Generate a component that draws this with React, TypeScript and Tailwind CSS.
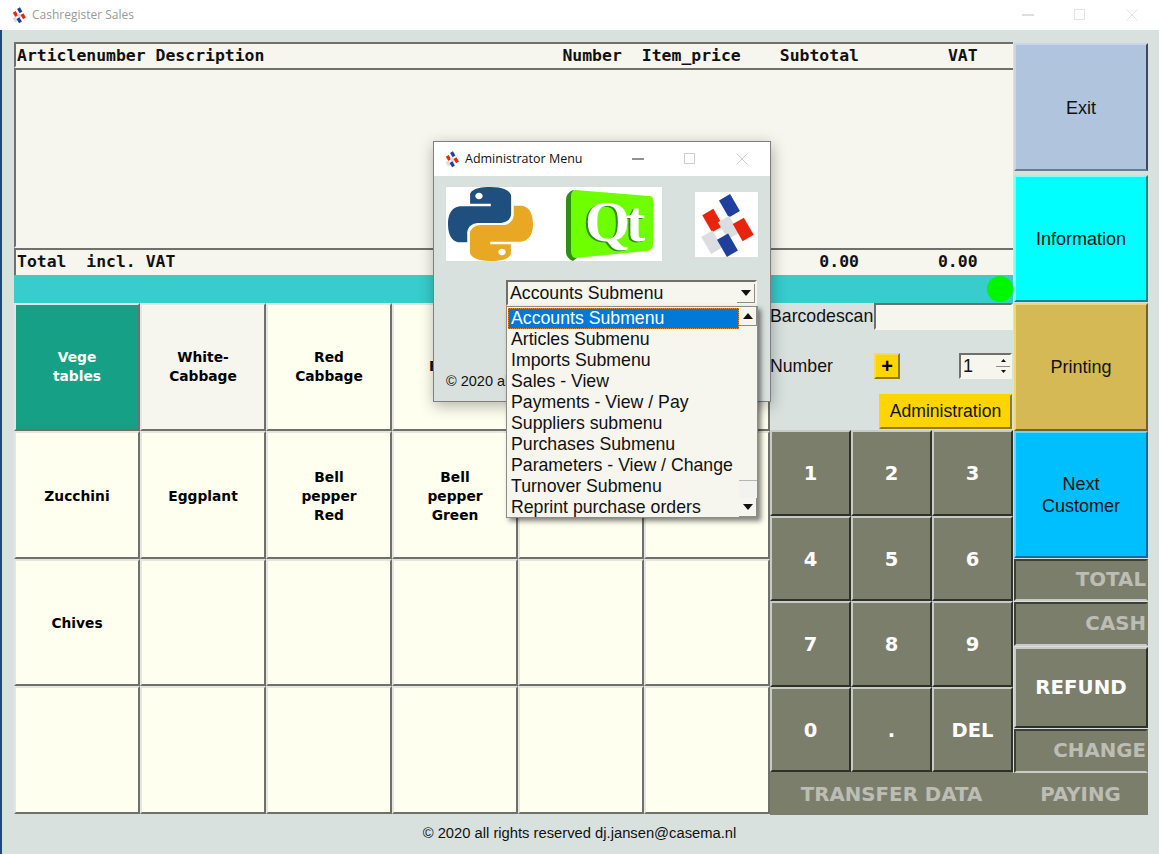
import React from 'react';

const mono = "font-['DejaVu_Sans_Mono',monospace]";
const arial = "font-['Liberation_Sans',Arial,sans-serif]";
const verdana = "font-['DejaVu_Sans',Verdana,sans-serif]";
const segoe = "font-['Open_Sans','Noto_Sans',sans-serif]";

const bevel = 'border-2 border-t-[#e4e7e1] border-l-[#e4e7e1] border-r-[#6f706a] border-b-[#6f706a]';
const sunken = 'border-2 border-t-[#6f6f6b] border-l-[#6f6f6b] border-r-[#f6f5ee] border-b-[#f6f5ee]';

const ARTICLES = [
  'Vege\ntables', 'White-\nCabbage', 'Red\nCabbage', 'Fennel', '', '',
  'Zucchini', 'Eggplant', 'Bell\npepper\nRed', 'Bell\npepper\nGreen', '', '',
  'Chives', '', '', '', '', '',
  '', '', '', '', '', '',
];

const KEYS = ['1', '2', '3', '4', '5', '6', '7', '8', '9', '0', '.', 'DEL'];

const MENU = [
  'Accounts Submenu',
  'Articles Submenu',
  'Imports Submenu',
  'Sales - View',
  'Payments - View / Pay',
  'Suppliers submenu',
  'Purchases Submenu',
  'Parameters - View / Change',
  'Turnover Submenu',
  'Reprint purchase orders',
];

// the six tilted blocks of the company logo: x, y, colour
const LOGO_BLOCKS: [number, number, string][] = [
  [35, 13, '#1f3f9c'],
  [18, 28, '#e8240c'],
  [34, 35, '#dcdde0'],
  [49, 37, '#e8240c'],
  [17, 50, '#dcdde0'],
  [33, 53, '#1f3f9c'],
];

const CompanyLogo = ({ className }: { className: string }) => (
  <svg viewBox="0 0 64 64" className={className}>
    {LOGO_BLOCKS.map(([x, y, color]) => (
      <rect
        key={`${x}-${y}`}
        x="-6.5"
        y="-10"
        width="13"
        height="20"
        fill={color}
        transform={`translate(${x} ${y}) rotate(-30)`}
      />
    ))}
  </svg>
);

const PYTHON_PATH =
  'M54.9 0C26.8 0 28.6 12.2 28.6 12.2l0 12.6h26.8v3.8H17.9S0 26.5 0 54.9s15.6 27.4 15.6 27.4h9.3V69.1s-.5-15.6 15.4-15.6h26.5s14.9.2 14.9-14.4V14.9S83.9 0 54.9 0zM40.1 8.5c2.7 0 4.8 2.2 4.8 4.8s-2.2 4.8-4.8 4.8-4.8-2.2-4.8-4.8 2.2-4.8 4.8-4.8z';

const PythonLogo = () => (
  <svg viewBox="0 0 110 110" className="w-[85px] h-[74px] ml-[2px]" preserveAspectRatio="none">
    <path fill="#1f4f7f" d={PYTHON_PATH} />
    <path fill="#e8a823" transform="rotate(180 55 55)" d={PYTHON_PATH} />
  </svg>
);

const QtLogo = () => (
  <div className="relative w-[89px] h-[71px]">
    <svg viewBox="0 0 89 71" className="absolute inset-0 w-full h-full">
      <path fill="#2f8f14" d="M8 0Q1 3 1 10L1 62Q1 68 8 71L12 68L12 4Z" />
      <path fill="#6eff00" d="M10 0L84 6Q88 6 88 10L88 54Q88 60 82 61L10 68Q6 67 6 61L6 6Q6 1 10 0Z" />
    </svg>
    <span className="absolute left-[20px] top-[3px] font-['Liberation_Serif',serif] font-bold text-[58px] leading-[58px] tracking-[-4px] text-white [text-shadow:-2px_1px_0_#2f8f14]">
      Qt
    </span>
  </div>
);

const WindowControls = ({ dim }: { dim: boolean }) => (
  <div className="flex items-center gap-[36px]">
    <svg width="16" height="16" viewBox="0 0 16 16">
      <path d="M2 8h12" stroke={dim ? '#bdbdbd' : '#555'} strokeWidth={dim ? 1 : 1.3} />
    </svg>
    <svg width="16" height="16" viewBox="0 0 16 16">
      <rect x="2.5" y="2.5" width="10" height="10" fill="none" stroke={dim ? '#e4e4e4' : '#cfcfcf'} />
    </svg>
    <svg width="16" height="16" viewBox="0 0 16 16">
      <path d="M2.5 2.5l11 11M13.5 2.5l-11 11" stroke={dim ? '#e4e4e4' : '#cfcfcf'} />
    </svg>
  </div>
);

const SideButton = ({ label, className }: { label: string; className: string }) => (
  <button className={`w-full flex items-center justify-center text-center whitespace-pre-line ${arial} text-[18px] leading-[22px] text-[#111] border-2 ${className}`}>
    {label}
  </button>
);

const SumField = ({ label, className }: { label: string; className: string }) => (
  <div className={`flex items-center justify-end bg-[#7c7e6c] border-2 border-t-[#3d3e36] border-l-[#3d3e36] border-r-[#7c7e6c] border-b-[#c9ccc6] ${verdana} font-bold text-[19.8px] text-[#bcbdb4] ${className}`}>
    {label}
  </div>
);

const ScrollArrow = ({ up }: { up: boolean }) => (
  <div className="w-[18px] h-[19px] flex items-center justify-center bg-[#f6f5ee] border-r border-b border-[#8c8c88]">
    <svg width="10" height="6" viewBox="0 0 10 6">
      <path d={up ? 'M5 0l5 6H0z' : 'M0 0h10L5 6z'} fill="#111" />
    </svg>
  </div>
);

export default function App() {
  return (
    <div className="relative w-[1159px] h-[854px] overflow-hidden flex flex-col bg-[#d9e1df]">
      {/* Title bar */}
      <div className="h-[30px] shrink-0 bg-white flex items-center justify-between pl-[11px] pr-[19px]">
        <div className="flex items-center gap-[5px]">
          <CompanyLogo className="w-[16px] h-[18px]" />
          <span className={`${segoe} text-[12px] text-[#9a9a9a]`}>Cashregister Sales</span>
        </div>
        <WindowControls dim />
      </div>

      {/* Main window */}
      <div className="flex-1 flex flex-col border-l-2 border-[#1c4a80] pl-[12px] pt-[13px]">
        <div className="flex gap-[1px]">
          {/* Left part */}
          <div className="w-[999px] flex flex-col">
            <div className={`-mt-[1px] h-[26px] pt-[2px] flex items-center bg-[#f6f5ee] ${sunken} border-r-0 ${mono} font-bold text-[16.45px] text-[#111] whitespace-pre`}>
              <span className="pl-[1px]">Articlenumber Description</span>
              <span className="ml-[298px]">Number</span>
              <span className="ml-[20px]">Item_price</span>
              <span className="ml-[39px]">Subtotal</span>
              <span className="ml-[89px]">VAT</span>
            </div>
            <div className={`h-[180px] bg-[#f6f5ee] ${sunken} border-r-0`} />
            <div className={`h-[27px] flex items-center bg-[#f6f5ee] ${sunken} border-r-0 border-b-0 ${mono} font-bold text-[16.45px] text-[#111] whitespace-pre`}>
              <span className="pl-[1px]">Total  incl. VAT</span>
              <span className="ml-[644px]">0.00</span>
              <span className="ml-[79px]">0.00</span>
            </div>
            <div className="h-[28px] bg-[#38cccc] flex items-center justify-end">
              <span className="w-[26px] h-[26px] rounded-full bg-[#00f500]" />
            </div>

            <div className="flex">
              {/* Article buttons */}
              <div className="w-[756px] grid grid-cols-6 grid-rows-4 h-[511px]">
                {ARTICLES.map((label, i) => (
                  <button
                    key={i}
                    className={`flex items-center justify-center text-center whitespace-pre-line ${verdana} font-bold text-[13.8px] leading-[19px] ${bevel} ${
                      i >= 6 ? 'pt-[3px]' : ''
                    } ${
                      i === 0
                        ? 'bg-[#16a085] text-white border-t-[#5fb9a6] border-l-[#5fb9a6] border-b-[#0d5a4b] border-r-[#0d5a4b]'
                        : i === 1
                          ? 'bg-[#f6f5ee] text-black'
                          : 'bg-[#fffff0] text-black'
                    }`}
                  >
                    {label}
                  </button>
                ))}
              </div>

              {/* Scan and keypad */}
              <div className="w-[243px] flex flex-col">
                <div className="h-[127px] flex flex-col">
                  <div className="flex h-[27px] items-center">
                    <span className={`w-[104px] ${arial} text-[17.7px] text-[#111]`}>Barcodescan</span>
                    <div className={`flex-1 h-full bg-[#f6f5ee] ${sunken}`} />
                  </div>
                  <div className="flex items-center mt-[23px] h-[26px]">
                    <span className={`w-[104px] ${arial} text-[17.7px] text-[#111]`}>Number</span>
                    <button className={`w-[26px] h-[26px] flex items-center justify-center bg-[#ffd500] border-2 border-t-[#f3dc5c] border-l-[#f3dc5c] border-r-[#8a7a20] border-b-[#8a7a20] ${arial} font-bold text-[20px] leading-[20px] text-black`}>
                      +
                    </button>
                    <div className={`ml-[59px] w-[53px] h-[26px] flex bg-[#f6f5ee] ${sunken}`}>
                      <span className={`flex-1 pl-[2px] ${arial} text-[18px] leading-[22px] text-[#111]`}>1</span>
                      <div className="w-[14px] flex flex-col">
                        <div className="flex-1 flex items-center justify-center border-b border-[#8c8c88]">
                          <svg width="5" height="3" viewBox="0 0 5 3"><path d="M2.5 0l2.5 3H0z" fill="#111" /></svg>
                        </div>
                        <div className="flex-1 flex items-center justify-center">
                          <svg width="5" height="3" viewBox="0 0 5 3"><path d="M0 0h5L2.5 3z" fill="#111" /></svg>
                        </div>
                      </div>
                    </div>
                  </div>
                  <button className={`ml-[109px] mt-[15px] w-[133px] h-[35px] bg-[#ffd500] border-2 border-t-[#ffd500] border-l-[#ffd500] border-r-[#8a7a20] border-b-[#8a7a20] ${arial} text-[17.6px] text-[#111]`}>
                    Administration
                  </button>
                </div>
                <div className="grid grid-cols-3 grid-rows-4 h-[342px]">
                  {KEYS.map(k => (
                    <button
                      key={k}
                      className={`flex items-center justify-center pt-[2px] bg-[#7c7e6c] border-2 border-t-[#c9ccc6] border-l-[#c9ccc6] border-r-[#2f302a] border-b-[#2f302a] ${verdana} font-bold text-[19.5px] text-white`}
                    >
                      {k}
                    </button>
                  ))}
                </div>
                <div className={`h-[43px] pt-[2px] flex items-center justify-center bg-[#7c7e6c] ${verdana} font-bold text-[19.8px] text-[#bcbdb4]`}>
                  TRANSFER DATA
                </div>
              </div>
            </div>
          </div>

          {/* Right column */}
          <div className="w-[134px] flex flex-col">
            <SideButton label="Exit" className="h-[128px] mb-[4px] pt-[2px] bg-[#b0c4de] border-t-[#c9d6e8] border-l-[#c9d6e8] border-r-[#3f4a58] border-b-[#6b7a8c]" />
            <SideButton label="Information" className="h-[127px] mb-[1px] bg-[#00ffff] border-t-[#7fffff] border-l-[#7fffff] border-r-[#0f8585] border-b-[#0f8585]" />
            <SideButton label="Printing" className="h-[128px] bg-[#d4b955] border-t-[#f0d870] border-l-[#f0d870] border-r-[#6f6230] border-b-[#6f6230]" />
            <SideButton label={'Next\nCustomer'} className="h-[127px] mb-[1px] bg-[#00bfff] border-t-[#66d8ff] border-l-[#66d8ff] border-r-[#0b6f90] border-b-[#0b6f90]" />
            <SumField label="TOTAL" className="h-[42px] mb-[1px]" />
            <SumField label="CASH" className="h-[44px] mb-[1px]" />
            <button className={`h-[81px] mb-[1px] bg-[#7c7e6c] border-2 border-t-[#c9ccc6] border-l-[#c9ccc6] border-r-[#2f302a] border-b-[#2f302a] ${verdana} font-bold text-[19.8px] text-white`}>
              REFUND
            </button>
            <SumField label="CHANGE" className="h-[44px]" />
            <div className={`h-[42px] pt-[2px] -ml-[1px] flex items-center justify-center bg-[#7c7e6c] ${verdana} font-bold text-[19.8px] text-[#bcbdb4]`}>
              PAYING
            </div>
          </div>
        </div>

        <div className={`mt-[8px] w-[1133px] pr-[2px] text-center ${arial} text-[14.75px] leading-[20px] text-[#111]`}>
          © 2020 all rights reserved dj.jansen@casema.nl
        </div>
      </div>

      {/* Administrator dialog */}
      <div className="absolute left-[433px] top-[141px] w-[338px] h-[261px] flex flex-col bg-[#d9e1df] border border-[#7f7f7f] shadow-[1px_4px_14px_rgba(0,0,0,0.3)]">
        <div className="h-[34px] shrink-0 bg-white flex items-center justify-between pl-[10px] pr-[20px]">
          <div className="flex items-center gap-[5px]">
            <CompanyLogo className="w-[16px] h-[18px]" />
            <span className={`${segoe} text-[12.5px] text-[#111]`}>Administrator Menu</span>
          </div>
          <WindowControls dim={false} />
        </div>
        <div className="flex pt-[11px] pl-[12px]">
          <div className="w-[216px] h-[74px] flex items-start bg-white">
            <PythonLogo />
            <div className="ml-[32px] mt-[3px]"><QtLogo /></div>
          </div>
          <div className="ml-[33px] mt-[5px] w-[63px] h-[65px] bg-white">
            <CompanyLogo className="w-[63px] h-[65px]" />
          </div>
        </div>
        <div className={`mt-[19px] ml-[72px] w-[251px] h-[26px] flex items-center justify-between bg-[#f6f5ee] ${sunken} ${arial} text-[17.7px] text-[#111] pl-[2px]`}>
          <span>Accounts Submenu</span>
          <ScrollArrow up={false} />
        </div>
        <div className={`mt-[65px] ml-[12px] ${arial} text-[14.5px] leading-[20px] text-[#111]`}>
          © 2020 all rights reserved
        </div>
      </div>

      {/* Open combobox list */}
      <div className="absolute left-[506px] top-[306px] w-[252px] h-[212px] flex bg-[#f6f5ee] border border-[#8c8c88] shadow-[3px_3px_5px_rgba(0,0,0,0.5)]">
        <div className={`flex-1 flex flex-col pl-[1px] pt-[1px] ${arial} text-[17.7px] leading-[21px] text-[#111] whitespace-nowrap`}>
          {MENU.map((item, i) => (
            <div
              key={item}
              className={`pl-[3px] h-[21px] ${i === 0 ? 'bg-[#0078d7] text-white outline-1 -outline-offset-1 outline-dotted outline-[#e08a30]' : ''}`}
            >
              {item}
            </div>
          ))}
        </div>
        <div className="w-[18px] flex flex-col">
          <ScrollArrow up />
          <div className="h-[154px]" />
          <div className="flex-1 bg-[#f2f2f0] border-t border-[#b5b5b0]" />
          <ScrollArrow up={false} />
        </div>
      </div>
    </div>
  );
}
